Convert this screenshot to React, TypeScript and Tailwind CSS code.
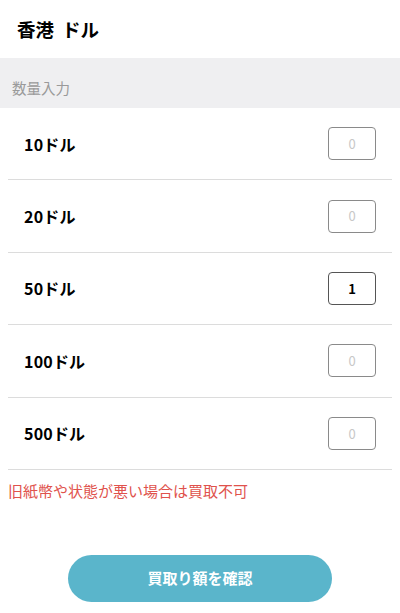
import React from "react";

const rows = [
  { label: "10ドル", value: "0" },
  { label: "20ドル", value: "0" },
  { label: "50ドル", value: "1" },
  { label: "100ドル", value: "0" },
  { label: "500ドル", value: "0" },
];

export default function App() {
  return (
    <div
      className="w-[400px] h-[613px] bg-white overflow-hidden"
      style={{ fontFamily: '"Noto Sans CJK JP", "Noto Sans", sans-serif' }}
    >
      <div className="h-[58px] flex items-center gap-[8px] pl-[17px] text-[18.5px] font-bold text-black leading-none">
        <span>香港</span>
        <span>ドル</span>
      </div>
      <div className="h-[50px] bg-[#efeff1] flex items-center pl-[12px] pt-[11px]">
        <span className="text-[14.5px] text-[#9a9a9a] leading-none">数量入力</span>
      </div>
      <div className="px-2">
        {rows.map((r) => (
          <div
            key={r.label}
            className="h-[72.4px] flex items-center justify-between border-b border-[#dcdcdc] pl-4 pr-4"
          >
            <span className="text-[16px] font-bold text-black leading-none tracking-[0.2px]">{r.label}</span>
            <div
              className={`w-[48px] h-[33px] rounded-[4px] border flex items-center justify-center text-[13px] ${
                r.value === "0"
                  ? "border-[#8a8a8a] text-[#c8c8c8]"
                  : "border-[#555] text-black font-bold"
              }`}
            >
              {r.value}
            </div>
          </div>
        ))}
        <div className="mt-[11px] text-[15px] leading-[20px] text-[#e0524c]">
          旧紙幣や状態が悪い場合は買取不可
        </div>
      </div>
      <div className="flex justify-center mt-[54px]">
        <button className="w-[264px] h-[47px] rounded-full bg-[#5ab5cb] text-white text-[15px] font-bold">
          買取り額を確認
        </button>
      </div>
    </div>
  );
}
